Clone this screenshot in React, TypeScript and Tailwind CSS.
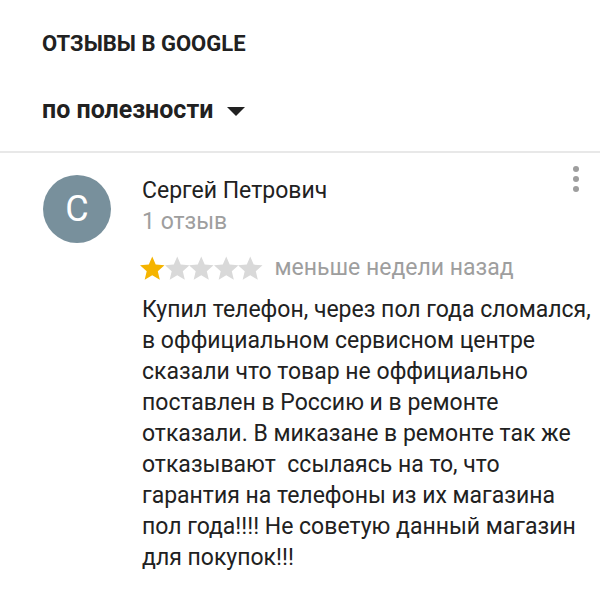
import React from 'react'

const Star = ({ filled }: { filled: boolean }) => (
  <svg viewBox="2 1.6 20 20" className="w-[24.5px] h-[24.5px] shrink-0">
    <path
      d="M12 17.27L18.18 21l-1.64-7.03L22 9.24l-7.19-.61L12 2 9.19 8.63 2 9.24l5.46 4.73L5.82 21z"
      fill={filled ? '#f5b400' : '#d9d9d9'}
    />
  </svg>
)

export default function App() {
  return (
    <div className="w-[600px] h-[600px] bg-white overflow-hidden font-['Roboto',sans-serif]">
      <div className="px-[42px] pt-[31px]">
        <h1 className="text-[22px] font-bold text-[#212121] leading-[26px]">ОТЗЫВЫ В GOOGLE</h1>
        <div className="flex items-center gap-[14px] mt-[38px] h-[30px]">
          <span className="text-[25px] font-bold text-[#212121]">по полезности</span>
          <svg viewBox="0 0 10 5" className="w-[18px] h-[9px] mt-[2px]">
            <path d="M0 0h10L5 5z" fill="#212121" />
          </svg>
        </div>
      </div>
      <div className="mt-[26px] h-[2px] bg-[#e8e8e8]" />
      <div className="flex pl-[43px] pr-[6px] pt-[22px] relative">
        <div className="w-[68px] h-[68px] rounded-full bg-[#78909c] flex items-center justify-center shrink-0">
          <span className="text-white text-[36px] leading-none">C</span>
        </div>
        <div className="ml-[31px] flex-1 -mt-[2px]">
          <div className="text-[23px] text-[#212121] leading-[30px] mt-[3px]">Сергей Петрович</div>
          <div className="text-[23px] text-[#9e9e9e] leading-[30px] mt-[1px]">1 отзыв</div>
          <div className="flex items-center mt-[17px] h-[28px]">
            <div className="flex -ml-[2px]">
              <Star filled />
              <Star filled={false} />
              <Star filled={false} />
              <Star filled={false} />
              <Star filled={false} />
            </div>
            <span className="ml-[12px] text-[23px] text-[#9e9e9e]">меньше недели назад</span>
          </div>
          <p className="mt-[12px] text-[23px] leading-[31px] text-[#212121]">
            Купил телефон, через пол года сломался, в оффициальном сервисном центре сказали что товар не оффициально поставлен в Россию и в ремонте отказали. В миказане в ремонте так же отказывают&nbsp; ссылаясь на то, что гарантия на телефоны из их магазина пол года!!!! Не советую данный магазин для покупок!!!
          </p>
        </div>
        <div className="absolute right-[21px] top-[13px] flex flex-col gap-[4px]">
          <span className="w-[6px] h-[6px] rounded-full bg-[#9e9e9e]" />
          <span className="w-[6px] h-[6px] rounded-full bg-[#9e9e9e]" />
          <span className="w-[6px] h-[6px] rounded-full bg-[#9e9e9e]" />
        </div>
      </div>
    </div>
  )
}
